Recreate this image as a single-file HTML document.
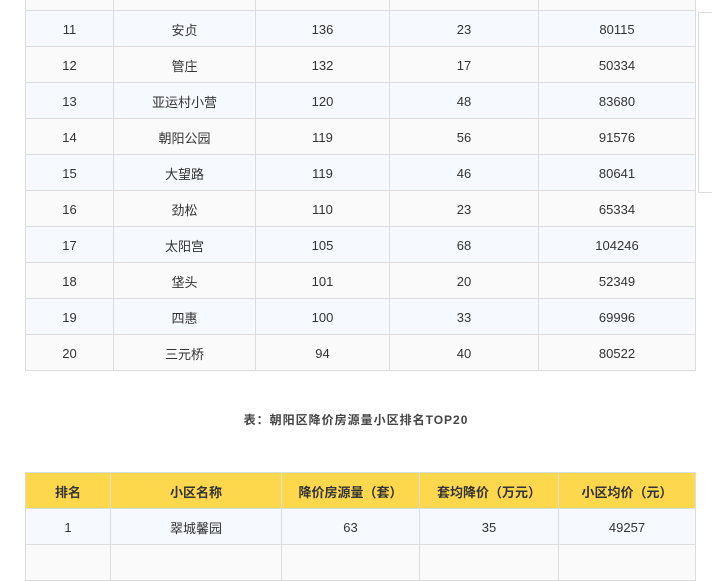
<!DOCTYPE html>
<html><head><meta charset="utf-8"><style>
html,body{margin:0;padding:0;background:#fff;}
body{width:712px;height:550px;position:relative;overflow:hidden;font-family:"Liberation Sans","Noto Sans CJK SC",sans-serif;color:#333;font-size:13px;}
table{border-collapse:collapse;position:absolute;left:25px;table-layout:fixed;}
td,th{border:1px solid #ddd;text-align:center;height:34px;padding:1px 0 0 0;}
tr.o td{background:#f6f9fe;}
tr.e td{background:#fafafa;}
#t1{top:-26px;width:670px;}
#t2{top:472px;width:670px;}
#t2 th{background:#fdd84c;font-weight:bold;color:#333;}
.cap{position:absolute;top:411px;left:0;width:712px;text-align:center;font-weight:bold;font-size:12px;color:#444;letter-spacing:1px;}
.side{position:absolute;left:698px;top:12px;width:20px;height:181px;border:1px solid #ddd;box-sizing:border-box;}
</style></head><body>
<table id="t1">
<colgroup><col style="width:88px"><col style="width:142px"><col style="width:134px"><col style="width:149px"><col style="width:157px"></colgroup>
<tr class="e"><td>10</td><td></td><td></td><td></td><td></td></tr>
<tr class="o"><td>11</td><td>安贞</td><td>136</td><td>23</td><td>80115</td></tr>
<tr class="e"><td>12</td><td>管庄</td><td>132</td><td>17</td><td>50334</td></tr>
<tr class="o"><td>13</td><td>亚运村小营</td><td>120</td><td>48</td><td>83680</td></tr>
<tr class="e"><td>14</td><td>朝阳公园</td><td>119</td><td>56</td><td>91576</td></tr>
<tr class="o"><td>15</td><td>大望路</td><td>119</td><td>46</td><td>80641</td></tr>
<tr class="e"><td>16</td><td>劲松</td><td>110</td><td>23</td><td>65334</td></tr>
<tr class="o"><td>17</td><td>太阳宫</td><td>105</td><td>68</td><td>104246</td></tr>
<tr class="e"><td>18</td><td>垡头</td><td>101</td><td>20</td><td>52349</td></tr>
<tr class="o"><td>19</td><td>四惠</td><td>100</td><td>33</td><td>69996</td></tr>
<tr class="e"><td>20</td><td>三元桥</td><td>94</td><td>40</td><td>80522</td></tr>
</table>
<div class="side"></div>
<div class="cap">表：朝阳区降价房源量小区排名TOP20</div>
<table id="t2">
<colgroup><col style="width:85px"><col style="width:171px"><col style="width:138px"><col style="width:139px"><col style="width:137px"></colgroup>
<tr><th>排名</th><th>小区名称</th><th>降价房源量（套）</th><th>套均降价（万元）</th><th>小区均价（元）</th></tr>
<tr class="o"><td>1</td><td>翠城馨园</td><td>63</td><td>35</td><td>49257</td></tr>
<tr class="e"><td></td><td></td><td></td><td></td><td></td></tr>
</table>
</body></html>
